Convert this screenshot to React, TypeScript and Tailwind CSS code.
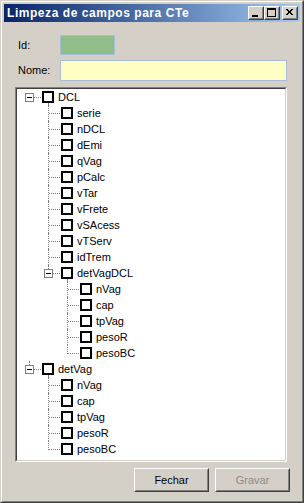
import React from "react";

type Node = { label: string; children?: Node[] };

const data: Node[] = [
  {
    label: "DCL",
    children: [
      { label: "serie" },
      { label: "nDCL" },
      { label: "dEmi" },
      { label: "qVag" },
      { label: "pCalc" },
      { label: "vTar" },
      { label: "vFrete" },
      { label: "vSAcess" },
      { label: "vTServ" },
      { label: "idTrem" },
      {
        label: "detVagDCL",
        children: [
          { label: "nVag" },
          { label: "cap" },
          { label: "tpVag" },
          { label: "pesoR" },
          { label: "pesoBC" },
        ],
      },
    ],
  },
  {
    label: "detVag",
    children: [
      { label: "nVag" },
      { label: "cap" },
      { label: "tpVag" },
      { label: "pesoR" },
      { label: "pesoBC" },
    ],
  },
];

type Row = {
  label: string;
  level: number;
  isLast: boolean;
  isFirst: boolean;
  hasChildren: boolean;
  cont: boolean[];
};

function flatten(nodes: Node[], level: number, cont: boolean[], out: Row[]) {
  nodes.forEach((n, i) => {
    const isLast = i === nodes.length - 1;
    out.push({
      label: n.label,
      level,
      isLast,
      isFirst: i === 0,
      hasChildren: !!n.children,
      cont: [...cont],
    });
    if (n.children) flatten(n.children, level + 1, [...cont, !isLast], out);
  });
  return out;
}

const rows = flatten(data, 0, [], []);

const COL = 19;
const lineX = (k: number) => 12 + COL * k;
const cbX = (l: number) => 25 + COL * l;

function VLine({ x, top, h }: { x: number; top: number; h: number }) {
  return (
    <div
      className="absolute w-0 border-l border-dotted border-[#808080]"
      style={{ left: x, top, height: h }}
    />
  );
}
function HLine({ x, w }: { x: number; w: number }) {
  return (
    <div
      className="absolute h-0 border-t border-dotted border-[#808080]"
      style={{ left: x, top: 8, width: w }}
    />
  );
}

function TreeRow({ r }: { r: Row }) {
  const L = r.level;
  const parts: React.ReactNode[] = [];
  r.cont.forEach((c, k) => {
    if (c && k >= 1) parts.push(<VLine key={"a" + k} x={lineX(k)} top={0} h={16} />);
  });
  if (L === 0) {
    if (!r.isFirst) parts.push(<VLine key="v0" x={lineX(0)} top={0} h={4} />);
  } else {
    parts.push(
      <VLine key="v" x={lineX(L)} top={0} h={r.isLast ? (r.hasChildren ? 4 : 9) : 16} />
    );
  }
  if (r.hasChildren) {
    parts.push(<VLine key="c" x={lineX(L + 1)} top={14} h={2} />);
    parts.push(<HLine key="h" x={lineX(L) + 5} w={cbX(L) - lineX(L) - 6} />);
    parts.push(
      <div
        key="box"
        className="absolute w-[9px] h-[9px] border border-[#808080] bg-white flex items-center justify-center"
        style={{ left: lineX(L) - 4, top: 4 }}
      >
        <div className="w-[5px] h-px bg-black" />
      </div>
    );
  } else {
    parts.push(<HLine key="h" x={lineX(L) + 1} w={cbX(L) - lineX(L) - 2} />);
  }
  return (
    <div className="relative h-4 flex items-center">
      {parts}
      <div
        className="w-[12px] h-[12px] border-2 border-black bg-white shrink-0"
        style={{ marginLeft: cbX(L) }}
      />
      <span className="ml-[4px] text-[11px] leading-4 text-black whitespace-nowrap">{r.label}</span>
    </div>
  );
}

function Raised({ children, className = "" }: { children: React.ReactNode; className?: string }) {
  return (
    <div className={"border border-t-white border-l-white border-r-[#404040] border-b-[#404040] " + className}>
      <div className="w-full h-full border border-t-[#d4d0c8] border-l-[#d4d0c8] border-r-[#808080] border-b-[#808080] bg-[#d4d0c8] flex items-center justify-center">
        {children}
      </div>
    </div>
  );
}

export default function App() {
  return (
    <div
      className="w-[304px] h-[503px] border border-t-[#d4d0c8] border-l-[#d4d0c8] border-r-[#404040] border-b-[#404040] bg-[#d4d0c8]"
      style={{ fontFamily: '"Liberation Sans", Arial, sans-serif' }}
    >
      <div className="w-full h-full border border-t-white border-l-white border-r-[#808080] border-b-[#808080] p-[2px] flex flex-col">
        {/* title bar */}
        <div className="h-[18px] bg-linear-to-r from-[#0a246a] to-[#a6caf0] flex items-center pl-[3px] pr-[2px]">
          <span className="text-white font-bold text-[12px] tracking-[0.55px] leading-none flex-1">Limpeza de campos para CTe</span>
          <div className="flex items-center">
            <Raised className="w-[16px] h-[14px]">
              <svg width="12" height="10" viewBox="0 0 12 10">
                <rect x="2" y="7" width="6" height="2" fill="black" />
              </svg>
            </Raised>
            <Raised className="w-[16px] h-[14px]">
              <svg width="12" height="10" viewBox="0 0 12 10">
                <rect x="1.5" y="0.5" width="8" height="8" fill="none" stroke="black" />
                <rect x="1" y="1" width="9" height="1" fill="black" />
              </svg>
            </Raised>
            <Raised className="w-[16px] h-[14px] ml-[2px]">
              <svg width="12" height="10" viewBox="0 0 12 10">
                <path d="M2 1 L8 7 M3 1 L9 7 M8 1 L2 7 M9 1 L3 7" stroke="black" strokeWidth="1" shapeRendering="crispEdges" />
              </svg>
            </Raised>
          </div>
        </div>
        {/* body */}
        <div className="flex flex-col pl-[11px] pr-[9px] text-[11px] text-black">
          <div className="flex items-center mt-[13px] h-[20px]">
            <span className="w-[45px] pl-[3px]">Id:</span>
            <div className="w-[55px] h-[20px] border border-[#a9bdd9] bg-[#8fbe8b]" />
          </div>
          <div className="flex items-center mt-[5px] h-[21px]">
            <span className="w-[45px] pl-[3px]">Nome:</span>
            <div className="w-[227px] h-[21px] border border-[#a9bdd9] bg-[#ffffc4]" />
          </div>
          {/* tree */}
          <div className="mt-[6px] w-[272px] h-[375px] border border-t-[#808080] border-l-[#808080] border-r-white border-b-white">
            <div className="w-full h-full border border-t-[#404040] border-l-[#404040] border-r-[#d4d0c8] border-b-[#d4d0c8] bg-white overflow-hidden">
              {rows.map((r, i) => (
                <TreeRow key={i} r={r} />
              ))}
            </div>
          </div>
          {/* buttons */}
          <div className="flex justify-end gap-[6px] mt-[6px] pr-px">
            <Raised className="w-[75px] h-[24px]">
              <span className="text-[11px] text-black">Fechar</span>
            </Raised>
            <Raised className="w-[75px] h-[24px]">
              <span className="text-[11px] text-[#8a8a8a]">Gravar</span>
            </Raised>
          </div>
        </div>
      </div>
    </div>
  );
}
